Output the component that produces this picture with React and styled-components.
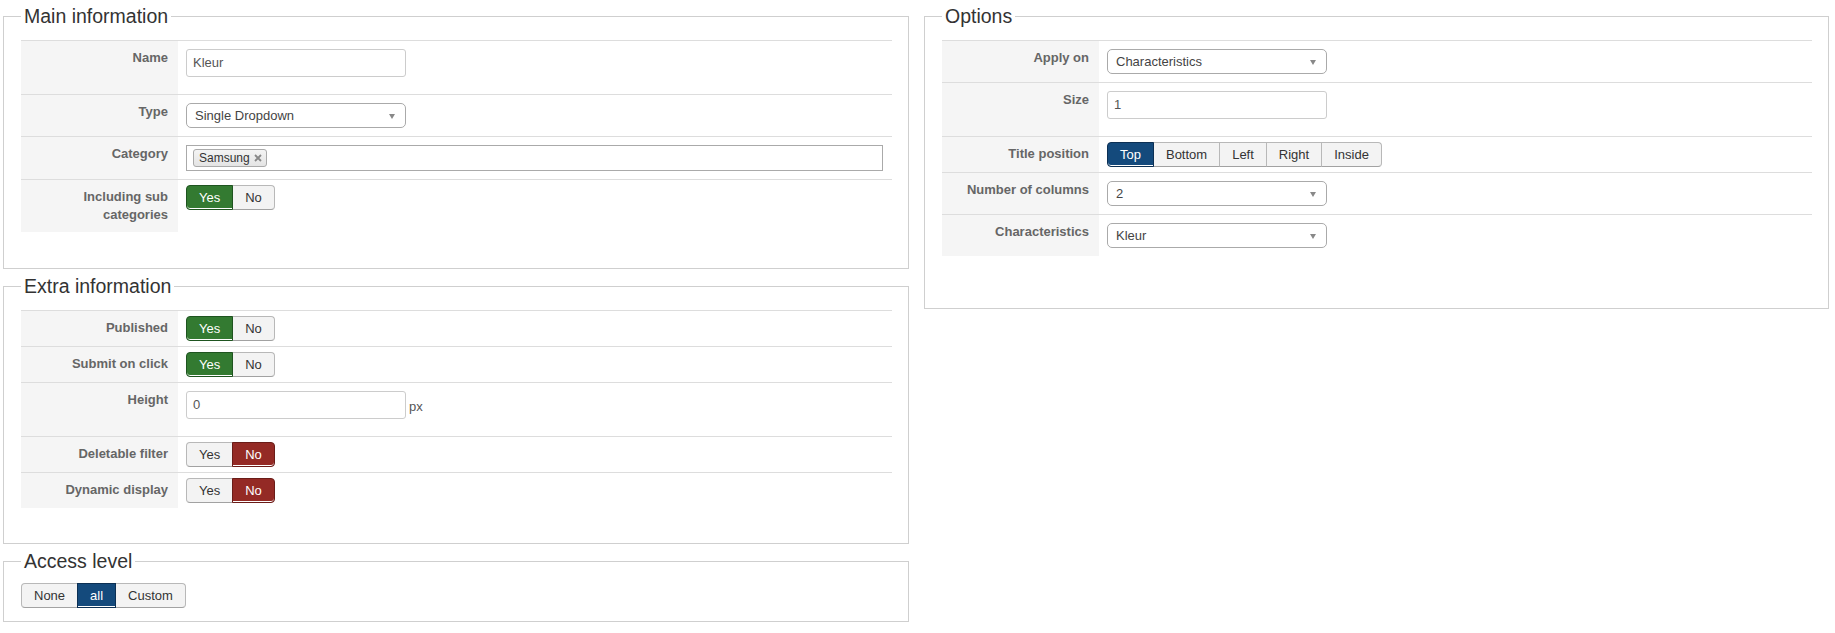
import React from "react";
import styled, { createGlobalStyle, css } from "styled-components";

const GlobalStyle = createGlobalStyle`
  html, body { margin: 0; padding: 0; background: #fff; }
  body {
    font-family: "Liberation Sans", Arial, sans-serif;
    font-size: 13px;
    line-height: 18px;
    color: #333;
  }
  * { box-sizing: border-box; }
`;

const Page = styled.div`
  display: grid;
  grid-template-columns: 906px 905px;
  column-gap: 15px;
  align-items: start;
  padding: 4px 0 0 3px;
`;

const Column = styled.div`
  display: flex;
  flex-direction: column;
  gap: 5px;
`;

const Fieldset = styled.fieldset`
  margin: 0;
  border: 1px solid #cfcfcf;
  padding: ${(p) => p.$pt || 12}px 16px ${(p) => p.$pb || 36}px 17px;
  min-width: 0;
`;

const Legend = styled.legend`
  font-size: 19.5px;
  line-height: 24px;
  color: #333;
  padding: 0 3px;
  margin: 0;
`;

const Table = styled.div`
  display: flex;
  flex-direction: column;
`;

const Row = styled.div`
  display: grid;
  grid-template-columns: 157px 1fr;
  border-top: 1px solid #dddddd;
`;

const Label = styled.div`
  background: #f5f5f5;
  text-align: right;
  font-weight: bold;
  color: #666;
  padding: 8px 10px 8px 8px;
  line-height: 18px;
`;

const Cell = styled.div`
  padding: ${(p) => (p.$tight ? "5px 8px" : "8px")};
  display: flex;
  align-items: flex-start;
`;

const TextInput = styled.div`
  width: 220px;
  height: 28px;
  border: 1px solid #cccccc;
  border-radius: 3px;
  padding: 0 6px;
  display: flex;
  align-items: center;
  color: #555;
  background: #fff;
  margin-bottom: 9px;
`;

const Unit = styled.span`
  margin: 7px 0 0 3px;
  color: #555;
`;

const Select = styled.div`
  position: relative;
  width: 220px;
  height: 25px;
  border: 1px solid #aaaaaa;
  border-radius: 5px;
  padding: 0 8px;
  display: flex;
  align-items: center;
  color: #444;
  background: #fff;
  &::after {
    content: "";
    position: absolute;
    right: 10px;
    top: 10px;
    border-left: 3.5px solid transparent;
    border-right: 3.5px solid transparent;
    border-top: 5px solid #888;
  }
`;

const MultiSelect = styled.div`
  width: 697px;
  height: 26px;
  border: 1px solid #aaaaaa;
  padding: 3px 6px;
  display: flex;
  align-items: flex-start;
  background: #fff;
`;

const Chip = styled.span`
  display: inline-flex;
  align-items: center;
  gap: 4px;
  height: 18px;
  padding: 0 4px 0 5px;
  border: 1px solid #aaaaaa;
  border-radius: 3px;
  background: linear-gradient(#f4f4f4, #e4e4e4);
  font-size: 12px;
  line-height: 16px;
  color: #333;
`;

const BtnGroup = styled.div`
  display: inline-flex;
  height: 25px;
`;

const activeColors = {
  green: ["#337a31", "#1f5420"],
  red: ["#942a25", "#6a1c18"],
  blue: ["#144a7c", "#0c3054"],
};

const Btn = styled.span`
  display: flex;
  align-items: center;
  height: 25px;
  padding: 0 12px;
  font-size: 13px;
  color: #333;
  background: #f3f3f3;
  border: 1px solid #b8b8b8;
  border-bottom-color: #a2a2a2;
  & + & { margin-left: -1px; }
  &:first-child { border-radius: 4px 0 0 4px; }
  &:last-child { border-radius: 0 4px 4px 0; }
  ${(p) =>
    p.$active &&
    css`
      position: relative;
      z-index: 1;
      color: #fff;
      background: ${activeColors[p.$active][0]};
      border-color: ${activeColors[p.$active][1]};
      box-shadow: inset 0 -1px 0 #fff;
    `}
`;

const CloseIcon = () => (
  <svg width="8" height="8" viewBox="0 0 8 8">
    <path d="M1 1L7 7M7 1L1 7" stroke="#888" strokeWidth="1.8" />
  </svg>
);

const Toggle = ({ items, active, color }) => (
  <BtnGroup>
    {items.map((it) => (
      <Btn key={it} $active={it === active ? color : undefined}>
        {it}
      </Btn>
    ))}
  </BtnGroup>
);

const YesNo = ({ value }) => (
  <Toggle items={["Yes", "No"]} active={value ? "Yes" : "No"} color={value ? "green" : "red"} />
);

export default function App() {
  return (
    <>
      <GlobalStyle />
      <Page>
        <Column>
          <Fieldset $pb={36}>
            <Legend>Main information</Legend>
            <Table>
              <Row>
                <Label>Name</Label>
                <Cell>
                  <TextInput>Kleur</TextInput>
                </Cell>
              </Row>
              <Row>
                <Label>Type</Label>
                <Cell>
                  <Select>Single Dropdown</Select>
                </Cell>
              </Row>
              <Row>
                <Label>Category</Label>
                <Cell>
                  <MultiSelect>
                    <Chip>
                      Samsung <CloseIcon />
                    </Chip>
                  </MultiSelect>
                </Cell>
              </Row>
              <Row>
                <Label>Including sub categories</Label>
                <Cell $tight>
                  <YesNo value />
                </Cell>
              </Row>
            </Table>
          </Fieldset>

          <Fieldset $pb={35}>
            <Legend>Extra information</Legend>
            <Table>
              <Row>
                <Label>Published</Label>
                <Cell $tight>
                  <YesNo value />
                </Cell>
              </Row>
              <Row>
                <Label>Submit on click</Label>
                <Cell $tight>
                  <YesNo value />
                </Cell>
              </Row>
              <Row>
                <Label>Height</Label>
                <Cell>
                  <TextInput>0</TextInput>
                  <Unit>px</Unit>
                </Cell>
              </Row>
              <Row>
                <Label>Deletable filter</Label>
                <Cell $tight>
                  <YesNo value={false} />
                </Cell>
              </Row>
              <Row>
                <Label>Dynamic display</Label>
                <Cell $tight>
                  <YesNo value={false} />
                </Cell>
              </Row>
            </Table>
          </Fieldset>

          <Fieldset $pt={10} $pb={13}>
            <Legend>Access level</Legend>
            <div>
              <Toggle items={["None", "all", "Custom"]} active="all" color="blue" />
            </div>
          </Fieldset>
        </Column>

        <Column>
          <Fieldset $pb={52}>
            <Legend>Options</Legend>
            <Table>
              <Row>
                <Label>Apply on</Label>
                <Cell>
                  <Select>Characteristics</Select>
                </Cell>
              </Row>
              <Row>
                <Label>Size</Label>
                <Cell>
                  <TextInput>1</TextInput>
                </Cell>
              </Row>
              <Row>
                <Label>Title position</Label>
                <Cell $tight>
                  <Toggle
                    items={["Top", "Bottom", "Left", "Right", "Inside"]}
                    active="Top"
                    color="blue"
                  />
                </Cell>
              </Row>
              <Row>
                <Label>Number of columns</Label>
                <Cell>
                  <Select>2</Select>
                </Cell>
              </Row>
              <Row>
                <Label>Characteristics</Label>
                <Cell>
                  <Select>Kleur</Select>
                </Cell>
              </Row>
            </Table>
          </Fieldset>
        </Column>
      </Page>
    </>
  );
}
